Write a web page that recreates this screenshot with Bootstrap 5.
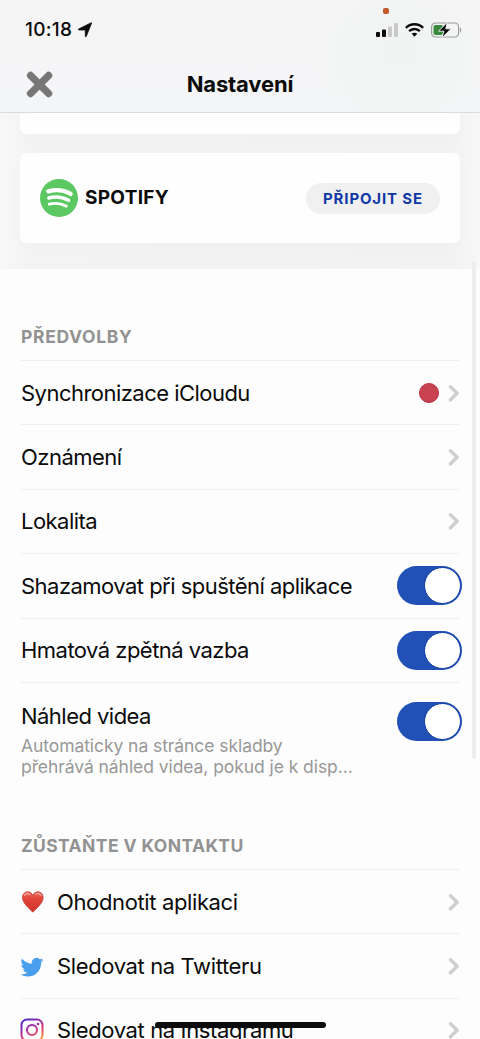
<!DOCTYPE html>
<html lang="cs">
<head>
<meta charset="utf-8">
<meta name="viewport" content="width=device-width, initial-scale=1">
<title>Nastavení</title>
<link href="https://cdn.jsdelivr.net/npm/bootstrap@5.3.0/dist/css/bootstrap.min.css" rel="stylesheet">
<style>
  html, body { height: 1039px; overflow: hidden; }
  body { font-family: Inter, "Liberation Sans", sans-serif; color: #0b0b0b; background: #fdfdfd; }
  svg { display: block; flex: none; }
  .screen { height: 1039px; overflow: hidden; }
  .topbar { height: 113px; border-bottom: 1px solid #dcdcde; background: radial-gradient(circle at 400px 52px, #f0f4f1 0, rgba(240,244,241,0) 90px), linear-gradient(180deg, #f5f5f5, #f4f5f7); }
  .status { height: 56px; padding: 4px 18px 0 25px; }
  .clock { font-size: 19px; font-weight: 500; letter-spacing: .3px; line-height: 24px; }
  .rec-dot { left: 383px; top: 8px; width: 6px; height: 6px; border-radius: 2px; background: #c6562c; }
  .titlebar { height: 56px; }
  .close-x { left: 26px; top: 14px; }
  .page-title { font-size: 22px; font-weight: 700; letter-spacing: -.15px; line-height: 28px; }
  .services { height: 156px; background: linear-gradient(90deg, #f8f8f8, #f3f3f3 30px, #f2f2f2 450px, #f7f7f7); }
  .tile { border: 0; background: #fefefe; box-shadow: 0 4px 22px rgba(0,0,0,.015); }
  .tile-top { height: 21px; border-radius: 0 0 6px 6px; }
  .tile-main { height: 90px; margin-top: 19px; border-radius: 6px; padding: 0 20px; }
  .brand { font-size: 19px; font-weight: 700; letter-spacing: .3px; padding-top: 1px; }
  .connect { width: 134px; height: 31px; background: #f0f0f0; color: #1139a6; font-size: 15px; font-weight: 700; letter-spacing: .85px; line-height: 31px; }
  .heading { font-size: 17.5px; font-weight: 700; color: #929292; line-height: 24px; }
  .pref-head { padding: 56px 0 0 1px; height: 91px; letter-spacing: .65px; }
  .contact-head { padding: 31px 0 0 1px; height: 66px; letter-spacing: .4px; }
  .rowline { height: 64.4px; border-top: 1px solid #f0f0f0; padding-left: 1px; font-size: 22px; line-height: 28px; white-space: nowrap; letter-spacing: -.53px; }
  .icon-row { letter-spacing: -.37px; padding-left: 0; }
  .icon-row > span { margin-left: 1px; }
  .tall { height: 121px; padding-top: 19px; }
  .note { font-size: 17.5px; line-height: 21.5px; letter-spacing: -.07px; color: #989898; margin-top: 5px; }
  .dot { width: 20px; height: 20px; background: #c94251; border: 1px solid #b92f43; margin-right: 9px; }
  .toggle { width: 65px; height: 39px; margin-right: -2px; background: #2150b7; padding-right: 1px; }
  .knob { width: 37px; height: 37px; background: #fff; border: 1px solid #0d38a0; }
  .ico { width: 36px; }
  .scroll-thumb { left: 472px; top: 261px; width: 4px; height: 498px; background: #ededed; }
  .home-bar { left: 155px; top: 1022px; width: 171px; height: 6px; background: #0c0c0c; }
</style>
</head>
<body>
<svg width="0" height="0" class="position-absolute">
  <symbol id="chev" viewBox="0 0 12 18"><path d="M2.500 2.800 9.200 9.300l-6.700 6.500" fill="none" stroke="#cfcfcf" stroke-width="3.500" stroke-linecap="round" stroke-linejoin="round"/></symbol>
</svg>
<main class="screen position-relative">
  <header class="topbar">
    <div class="status d-flex align-items-center">
      <span class="clock">10:18</span>
      <svg style="margin-left:5px" width="16" height="16" viewBox="0 0 16 16"><path d="M14.600 1 9.300 14.300c-.3.7-1 .6-1-.1V8H2c-.8 0-.9-.8-.2-1.100L13.900.9c.5-.2.9-.2.7.1z" fill="#0b0b0b" stroke="#0b0b0b" stroke-width=".8" stroke-linejoin="round"/></svg>
      <div class="ms-auto d-flex align-items-center">
        <svg width="22" height="14" viewBox="0 0 22 14"><g fill="#0b0b0b"><rect y="9" width="4" height="5" rx="1"/><rect x="6" y="6.500" width="4" height="7.500" rx="1"/></g><g fill="#c9c9c9"><rect x="12" y="3.500" width="4" height="10.500" rx="1"/><rect x="18" width="4" height="14" rx="1"/></g></svg>
        <svg style="margin-left:7px" width="19" height="14" viewBox="0 0 19 14"><g fill="none" stroke="#0b0b0b" stroke-width="2.500"><path d="M.9 4.900C5.600.1 13.400.1 18.100 4.900"/><path d="M4.100 8.200c3-3 7.800-3 10.800 0"/></g><path d="M6.700 10.800c1.600-1.500 4-1.500 5.600 0L9.500 13.800z" fill="#0b0b0b"/></svg>
        <svg style="margin-left:7px" width="31" height="16" viewBox="0 0 31 16"><rect x=".6" y="1" width="27" height="14" rx="4" fill="none" stroke="#9b9b9b" stroke-width="1.200"/><rect x="2.500" y="3" width="9.500" height="10" rx="2" fill="#37893d"/><path d="M29 5.500v5c1.700-.8 1.700-4.200 0-5z" fill="#9b9b9b"/><path d="M16.300.2 7.600 9.200h5.200l-1.700 6.600L20 6.800h-5.200z" fill="#0b0b0b" stroke="#f3f5f3" stroke-width=".9"/></svg>
      </div>
    </div>
    <div class="titlebar d-flex align-items-center justify-content-center position-relative">
      <svg class="close-x position-absolute" width="27" height="28" viewBox="0 0 27 28"><path d="m4.600 5.500 18 18m0-18-18 18" stroke="#777" stroke-width="7.400" stroke-linecap="round"/></svg>
      <h1 class="page-title m-0">Nastavení</h1>
    </div>
    <i class="rec-dot position-absolute"></i>
  </header>

  <section class="services px-3">
    <div class="mx-1">
      <div class="card tile tile-top"></div>
      <div class="card tile tile-main flex-row align-items-center">
        <svg width="38" height="38" viewBox="0 0 38 38"><circle cx="19" cy="19" r="19" fill="#5bc862"/><g fill="none" stroke="#fff" stroke-linecap="round"><path d="M8.200 12.300Q20.500 9 30.600 14.900" stroke-width="4.400"/><path d="M8.800 19Q19.500 16.200 28.500 21.300" stroke-width="3.500"/><path d="M9.300 25.200Q18.500 22.900 26.300 27.100" stroke-width="2.900"/></g></svg>
        <span class="brand" style="margin-left:7px">SPOTIFY</span>
        <button class="btn connect rounded-pill p-0 border-0 ms-auto">PŘIPOJIT SE</button>
      </div>
    </div>
  </section>

  <section class="px-3">
    <div class="mx-1">
      <h2 class="heading pref-head m-0">PŘEDVOLBY</h2>
      <div class="rowline d-flex align-items-center"><span>Synchronizace iCloudu</span><i class="dot rounded-circle ms-auto"></i><svg width="12" height="18"><use href="#chev"/></svg></div>
      <div class="rowline d-flex align-items-center"><span>Oznámení</span><svg class="ms-auto" width="12" height="18"><use href="#chev"/></svg></div>
      <div class="rowline d-flex align-items-center"><span>Lokalita</span><svg class="ms-auto" width="12" height="18"><use href="#chev"/></svg></div>
      <div class="rowline d-flex align-items-center"><span>Shazamovat při spuštění aplikace</span><div class="toggle rounded-pill ms-auto d-flex align-items-center justify-content-end"><i class="knob rounded-circle"></i></div></div>
      <div class="rowline d-flex align-items-center"><span>Hmatová zpětná vazba</span><div class="toggle rounded-pill ms-auto d-flex align-items-center justify-content-end"><i class="knob rounded-circle"></i></div></div>
      <div class="rowline tall d-flex align-items-start">
        <div><span>Náhled videa</span><div class="note">Automaticky na stránce skladby<br>přehrává náhled videa, pokud je k disp...</div></div>
        <div class="toggle rounded-pill ms-auto d-flex align-items-center justify-content-end"><i class="knob rounded-circle"></i></div>
      </div>
      <h2 class="heading contact-head m-0">ZŮSTAŇTE V KONTAKTU</h2>
      <div class="rowline icon-row d-flex align-items-center">
        <div class="ico"><svg width="25" height="24" viewBox="0 0 24 24"><defs><linearGradient id="hg" x2="0" y2="1"><stop stop-color="#ee6a5c"/><stop offset=".35" stop-color="#e2453a"/><stop offset="1" stop-color="#cf3227"/></linearGradient></defs><path d="M12.300 22.200C9 18.500 2 13.500 2 7.500 2 4 4.300 1.800 7.200 1.800c2.300 0 4.100 1.300 5.100 3.600 1-2.300 2.800-3.600 5.100-3.600 2.900 0 5.200 2.200 5.200 5.700 0 6-7 11-10.300 14.700z" fill="url(#hg)" stroke="#b93028" stroke-width=".7"/><path d="M4 5.500c.8-2 3.500-2.600 5-1M15.300 4.400c1.600-1.600 4.300-.9 5 1" fill="none" stroke="#f6b1a5" stroke-width="1.200" stroke-linecap="round"/></svg></div>
        <span>Ohodnotit aplikaci</span><svg class="ms-auto" width="12" height="18"><use href="#chev"/></svg></div>
      <div class="rowline icon-row d-flex align-items-center">
        <div class="ico"><svg width="24" height="23" viewBox="0 0 16 16"><path fill="#4a9fec" d="M5.026 15c6.038 0 9.341-5.003 9.341-9.334 0-.14 0-.282-.006-.422A6.685 6.685 0 0 0 16 3.542a6.658 6.658 0 0 1-1.889.518 3.301 3.301 0 0 0 1.447-1.817 6.533 6.533 0 0 1-2.087.793A3.286 3.286 0 0 0 7.875 6.030a9.325 9.325 0 0 1-6.767-3.429 3.289 3.289 0 0 0 1.018 4.382A3.323 3.323 0 0 1 .640 6.575v.045a3.288 3.288 0 0 0 2.632 3.218 3.203 3.203 0 0 1-.865.115 3.230 3.230 0 0 1-.614-.057 3.283 3.283 0 0 0 3.067 2.277A6.588 6.588 0 0 1 .780 13.580a6.320 6.320 0 0 1-.780-.045A9.344 9.344 0 0 0 5.026 15z"/></svg></div>
        <span>Sledovat na Twitteru</span><svg class="ms-auto" width="12" height="18"><use href="#chev"/></svg></div>
      <div class="rowline icon-row d-flex align-items-center">
        <div class="ico"><svg width="24" height="24" viewBox="0 0 24 24"><defs><linearGradient id="ig" gradientUnits="userSpaceOnUse" x1="2" y1="2" x2="14" y2="24"><stop stop-color="#4a2bc4"/><stop offset=".45" stop-color="#b02da0"/><stop offset=".75" stop-color="#e2466a"/><stop offset="1" stop-color="#f59a3c"/></linearGradient></defs><g fill="none" stroke="url(#ig)" stroke-width="2"><rect x="1.500" y="1.500" width="21" height="21" rx="5.500"/><circle cx="12" cy="12" r="5"/></g><circle cx="18" cy="6" r="1.300" fill="#a52aa8"/></svg></div>
        <span>Sledovat na Instagramu</span><svg class="ms-auto" width="12" height="18"><use href="#chev"/></svg></div>
    </div>
  </section>
  <div class="scroll-thumb position-absolute rounded-pill"></div>
  <div class="home-bar position-absolute rounded-pill"></div>
</main>
<script src="https://cdn.jsdelivr.net/npm/bootstrap@5.3.0/dist/js/bootstrap.bundle.min.js"></script>
</body>
</html>
